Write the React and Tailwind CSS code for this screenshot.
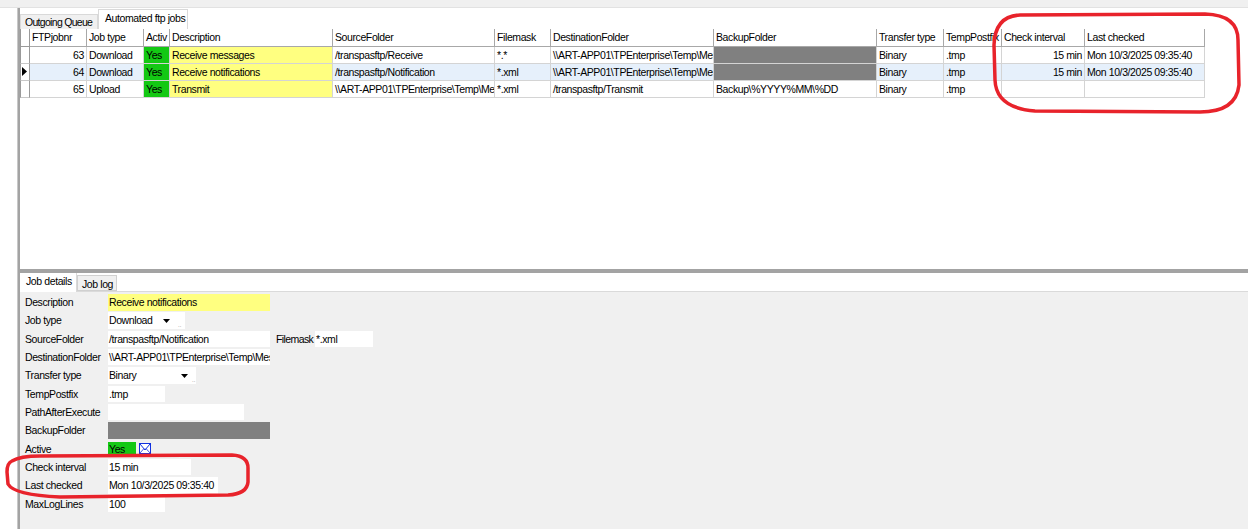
import React from 'react';

const cols = [
  { key: 'id', title: 'FTPjobnr', w: 57, right: true },
  { key: 'type', title: 'Job type', w: 57 },
  { key: 'active', title: 'Activ', w: 26 },
  { key: 'desc', title: 'Description', w: 163 },
  { key: 'src', title: 'SourceFolder', w: 162 },
  { key: 'mask', title: 'Filemask', w: 56 },
  { key: 'dest', title: 'DestinationFolder', w: 163 },
  { key: 'backup', title: 'BackupFolder', w: 163 },
  { key: 'transfer', title: 'Transfer type', w: 67 },
  { key: 'postfix', title: 'TempPostfix', w: 58 },
  { key: 'interval', title: 'Check interval', w: 83, right: true },
  { key: 'last', title: 'Last checked', w: 120 },
];

const rows = [
  {
    id: '63', type: 'Download', active: 'Yes', desc: 'Receive messages', src: '/transpasftp/Receive', mask: '*.*',
    dest: '\\\\ART-APP01\\TPEnterprise\\Temp\\Messages', backup: null, transfer: 'Binary', postfix: '.tmp',
    interval: '15 min', last: 'Mon 10/3/2025 09:35:40',
  },
  {
    id: '64', type: 'Download', active: 'Yes', desc: 'Receive notifications', src: '/transpasftp/Notification', mask: '*.xml',
    dest: '\\\\ART-APP01\\TPEnterprise\\Temp\\Messages', backup: null, transfer: 'Binary', postfix: '.tmp',
    interval: '15 min', last: 'Mon 10/3/2025 09:35:40', selected: true,
  },
  {
    id: '65', type: 'Upload', active: 'Yes', desc: 'Transmit', src: '\\\\ART-APP01\\TPEnterprise\\Temp\\Messages', mask: '*.xml',
    dest: '/transpasftp/Transmit', backup: 'Backup\\%YYYY%MM\\%DD', transfer: 'Binary', postfix: '.tmp',
    interval: '', last: '',
  },
];

function cellBg(key, row) {
  if (key === 'active') return 'bg-[#14c814]';
  if (key === 'desc') return 'bg-[#ffff80]';
  if (key === 'backup' && row.backup === null) return 'bg-[#808080]';
  return row.selected ? 'bg-[#e6f0fb]' : 'bg-white';
}

function Grid() {
  return (
    <div className="flex flex-col">
      {/* header */}
      <div className="flex h-[17.5px]">
        <div className="w-[10px] shrink-0 border-l border-r border-b border-[#9a9a9a] bg-white" />
        {cols.map((c) => (
          <div
            key={c.key}
            style={{ width: c.w }}
            className="shrink-0 border-r border-b border-[#a8a8a8] bg-white px-[2px] leading-[16.5px] whitespace-nowrap overflow-hidden"
          >
            {c.title}
          </div>
        ))}
      </div>
      {rows.map((r) => (
        <div key={r.id} className="flex h-[17.2px]">
          <div className="w-[10px] shrink-0 border-l border-r border-b border-l-[#9a9a9a] border-r-[#9a9a9a] border-b-[#c8c8c8] bg-white flex items-center pl-[1px]">
            {r.selected && (
              <svg width="5" height="9" viewBox="0 0 5 9">
                <path d="M0 0 L5 4.5 L0 9 Z" fill="#000" />
              </svg>
            )}
          </div>
          {cols.map((c) => (
            <div
              key={c.key}
              style={{ width: c.w }}
              className={`shrink-0 border-r border-b border-[#d4d4d4] px-[2px] leading-[16.2px] whitespace-nowrap overflow-hidden ${cellBg(c.key, r)} ${c.right ? 'text-right' : ''}`}
            >
              {c.key === 'backup' ? r.backup || '' : r[c.key]}
            </div>
          ))}
        </div>
      ))}
    </div>
  );
}

function Arrow() {
  return (
    <svg width="7" height="4" viewBox="0 0 7 4" className="shrink-0">
      <path d="M0 0 L7 0 L3.5 4 Z" fill="#000" />
    </svg>
  );
}

function Dots() {
  return <span className="self-end mb-[1px] text-[6px] leading-[6px] text-[#808080] tracking-[0px]">..</span>;
}

function Box({ w, bg = 'bg-white', children }) {
  return (
    <div
      style={{ width: w }}
      className={`h-[16.5px] leading-[16.5px] pl-[1px] whitespace-nowrap overflow-hidden shrink-0 ${bg}`}
    >
      {children}
    </div>
  );
}

function FormRow({ label, children }) {
  return (
    <div className="flex items-start h-[18.33px]">
      <div className="w-[83px] shrink-0 h-[16.5px] leading-[16.5px] whitespace-nowrap">{label}</div>
      {children}
    </div>
  );
}

function JobDetails() {
  return (
    <div className="flex flex-col pl-[5px] pt-[2px]">
      <FormRow label="Description">
        <Box w={162} bg="bg-[#ffff80]">Receive notifications</Box>
      </FormRow>
      <FormRow label="Job type">
        <div className="w-[77px] h-[16.5px] bg-white flex items-center pl-[1px]">
          <span className="w-[54px] shrink-0 leading-[16.5px]">Download</span>
          <Arrow />
          <span className="ml-[8px] flex h-full"><Dots /></span>
        </div>
      </FormRow>
      <FormRow label="SourceFolder">
        <Box w={162}>/transpasftp/Notification</Box>
        <div className="ml-[6px] w-[39px] h-[16.5px] leading-[16.5px] tracking-[-0.6px] whitespace-nowrap">Filemask</div>
        <Box w={58}>*.xml</Box>
      </FormRow>
      <FormRow label="DestinationFolder">
        <Box w={162}>\\ART-APP01\TPEnterprise\Temp\Messages</Box>
      </FormRow>
      <FormRow label="Transfer type">
        <div className="w-[88px] h-[16.5px] bg-white flex items-center pl-[1px]">
          <span className="w-[72px] shrink-0 leading-[16.5px]">Binary</span>
          <Arrow />
          <span className="ml-[4px] flex h-full"><Dots /></span>
        </div>
      </FormRow>
      <FormRow label="TempPostfix">
        <Box w={57}>.tmp</Box>
      </FormRow>
      <FormRow label="PathAfterExecute">
        <Box w={136} />
      </FormRow>
      <FormRow label="BackupFolder">
        <Box w={162} bg="bg-[#808080]" />
      </FormRow>
      <FormRow label="Active">
        <div className="w-[28px] h-[12px] mt-[1px] bg-[#14c814] leading-[14px] pl-[1px] overflow-hidden">Yes</div>
        <svg width="12" height="11" viewBox="0 0 12 11" className="ml-[3px] mt-[2px]">
          <rect x="0.5" y="0.5" width="11" height="10" fill="#fff" stroke="#1030e0" />
          <path d="M1 1 L6 7 L11 1" fill="none" stroke="#1030e0" />
          <path d="M1 10 L5 5.5 M11 10 L7 5.5" fill="none" stroke="#1030e0" strokeWidth="0.8" />
        </svg>
      </FormRow>
      <FormRow label="Check interval">
        <Box w={83}>15 min</Box>
      </FormRow>
      <FormRow label="Last checked">
        <Box w={110}>Mon 10/3/2025 09:35:40</Box>
      </FormRow>
      <FormRow label="MaxLogLines">
        <Box w={57}>100</Box>
      </FormRow>
    </div>
  );
}

export default function App() {
  return (
    <div className="relative w-[1248px] h-[529px] overflow-hidden bg-white text-black text-[10.5px] tracking-[-0.4px] font-['Liberation_Sans',Arial,sans-serif] flex flex-col select-none">
      {/* top strip */}
      <div className="h-[8px] shrink-0 bg-[#f0f0f0] border-b border-[#e2e2e2]" />

      <div className="flex flex-1 min-h-0">
        {/* left margin + bar */}
        <div className="w-[17px] shrink-0 bg-white" />
        <div className="w-[3px] shrink-0 bg-[#a3a3a3] border-l border-[#c8c8c8]" />

        <div className="flex-1 flex flex-col min-w-0">
          {/* upper panel */}
          <div className="h-[261px] shrink-0 bg-white flex flex-col">
            <div className="h-[21px] flex items-end shrink-0">
              <div className="h-[15px] w-[78px] pl-[4px] bg-[#f0f0f0] border border-b-0 border-[#d9d9d9] leading-[14px] tracking-[-0.7px] whitespace-nowrap">
                Outgoing Queue
              </div>
              <div className="h-[20px] w-[90px] pl-[6px] bg-white border border-b-0 border-[#d9d9d9] leading-[17px] whitespace-nowrap">
                Automated ftp jobs
              </div>
            </div>
            <Grid />
          </div>

          {/* splitter */}
          <div className="h-[4px] shrink-0 bg-[#a3a3a3]" />

          {/* lower panel */}
          <div className="flex-1 flex flex-col bg-[#f0f0f0]">
            <div className="h-[19px] shrink-0 bg-white border-b border-[#dadada] flex items-start">
              <div className="h-[19px] w-[57px] pl-[6px] bg-white border-r border-[#d9d9d9] leading-[17px] whitespace-nowrap">
                Job details
              </div>
              <div className="mt-[2px] h-[16px] w-[40px] pl-[4px] bg-[#f0f0f0] border border-[#d0d0d0] leading-[16px] whitespace-nowrap">
                Job log
              </div>
            </div>
            <JobDetails />
          </div>
        </div>
      </div>

      {/* red annotation marks */}
      <svg className="absolute inset-0 pointer-events-none" width="1248" height="529" viewBox="0 0 1248 529">
        <path
          d="M1020 15 L1205 14 Q1238 15 1238 40 L1239 85 Q1236 112 1200 112 L1035 111 Q996 108 995 80 L994 45 Q995 16 1020 15 Z"
          fill="none"
          stroke="#e8232b"
          strokeWidth="3.5"
        />
        <path
          d="M12 461 Q20 456 40 456 L232 455 Q248 456 248 468 L248 482 Q247 494 228 495 L60 497 Q14 495 8 484 L7 472 Q7 463 12 461 Z"
          fill="none"
          stroke="#e8232b"
          strokeWidth="3.5"
        />
      </svg>
    </div>
  );
}
